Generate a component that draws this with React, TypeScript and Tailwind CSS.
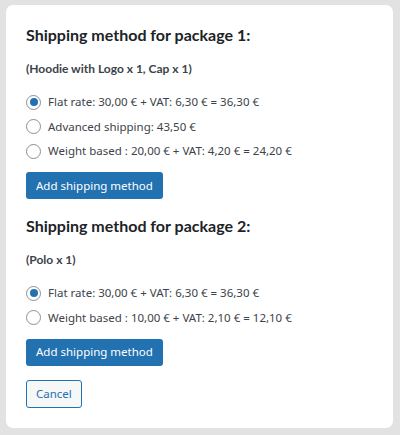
import { useState } from "react";

const heading = { fontFamily: 'Lato, "Noto Sans", sans-serif' };
const body = { fontFamily: '"Noto Sans", "Open Sans", sans-serif' };

interface Pkg {
  title: string;
  items: string;
  rates: string[];
}

const packages: Pkg[] = [
  {
    title: "Shipping method for package 1:",
    items: "(Hoodie with Logo x 1, Cap x 1)",
    rates: [
      "Flat rate: 30,00 € + VAT: 6,30 € = 36,30 €",
      "Advanced shipping: 43,50 €",
      "Weight based : 20,00 € + VAT: 4,20 € = 24,20 €",
    ],
  },
  {
    title: "Shipping method for package 2:",
    items: "(Polo x 1)",
    rates: [
      "Flat rate: 30,00 € + VAT: 6,30 € = 36,30 €",
      "Weight based : 10,00 € + VAT: 2,10 € = 12,10 €",
    ],
  },
];

function PackageBlock({ pkg, idx }: { pkg: Pkg; idx: number }) {
  const [sel, setSel] = useState(0);
  return (
    <section>
      <h3 className="text-[16px] font-bold leading-[24px] text-[#1d2327]" style={heading}>
        {pkg.title}
      </h3>
      <p className="mt-[13px] text-[12px] font-bold leading-[18px] text-[#3c434a]" style={heading}>
        {pkg.items}
      </p>
      <div className="mt-[15px] flex flex-col gap-[6.5px]">
        {pkg.rates.map((r, i) => (
          <label key={i} className="flex items-center gap-[7px] text-[11.5px] leading-[18px] text-[#3c434a]">
            <span
              onClick={() => setSel(i)}
              className="flex h-[15px] w-[15px] items-center justify-center rounded-full border border-[#8c8f94] bg-white"
            >
              {sel === i && <span className="h-[8px] w-[8px] rounded-full bg-[#2271b1]" />}
            </span>
            <input type="radio" name={`pkg-${idx}`} className="hidden" checked={sel === i} onChange={() => setSel(i)} />
            {r}
          </label>
        ))}
      </div>
      <button className="mt-[12px] h-[27px] rounded-[3px] bg-[#2271b1] px-[10px] text-[11.5px] text-white">
        Add shipping method
      </button>
    </section>
  );
}

export default function App() {
  return (
    <div className="min-h-[435px] bg-[#e2e2e2] pl-[6px] pr-[7px] pt-[5px] pb-[7px]" style={body}>
      <div className="rounded-[7px] bg-white px-[20px] pt-[18px] pb-[20px]">
        <div className="flex flex-col gap-[15px]">
          {packages.map((p, i) => (
            <PackageBlock key={i} pkg={p} idx={i} />
          ))}
        </div>
        <button className="mt-[14px] h-[28px] rounded-[3px] border border-[#2271b1] bg-[#f6f7f7] px-[9px] text-[11.5px] text-[#2271b1]">
          Cancel
        </button>
      </div>
    </div>
  );
}
